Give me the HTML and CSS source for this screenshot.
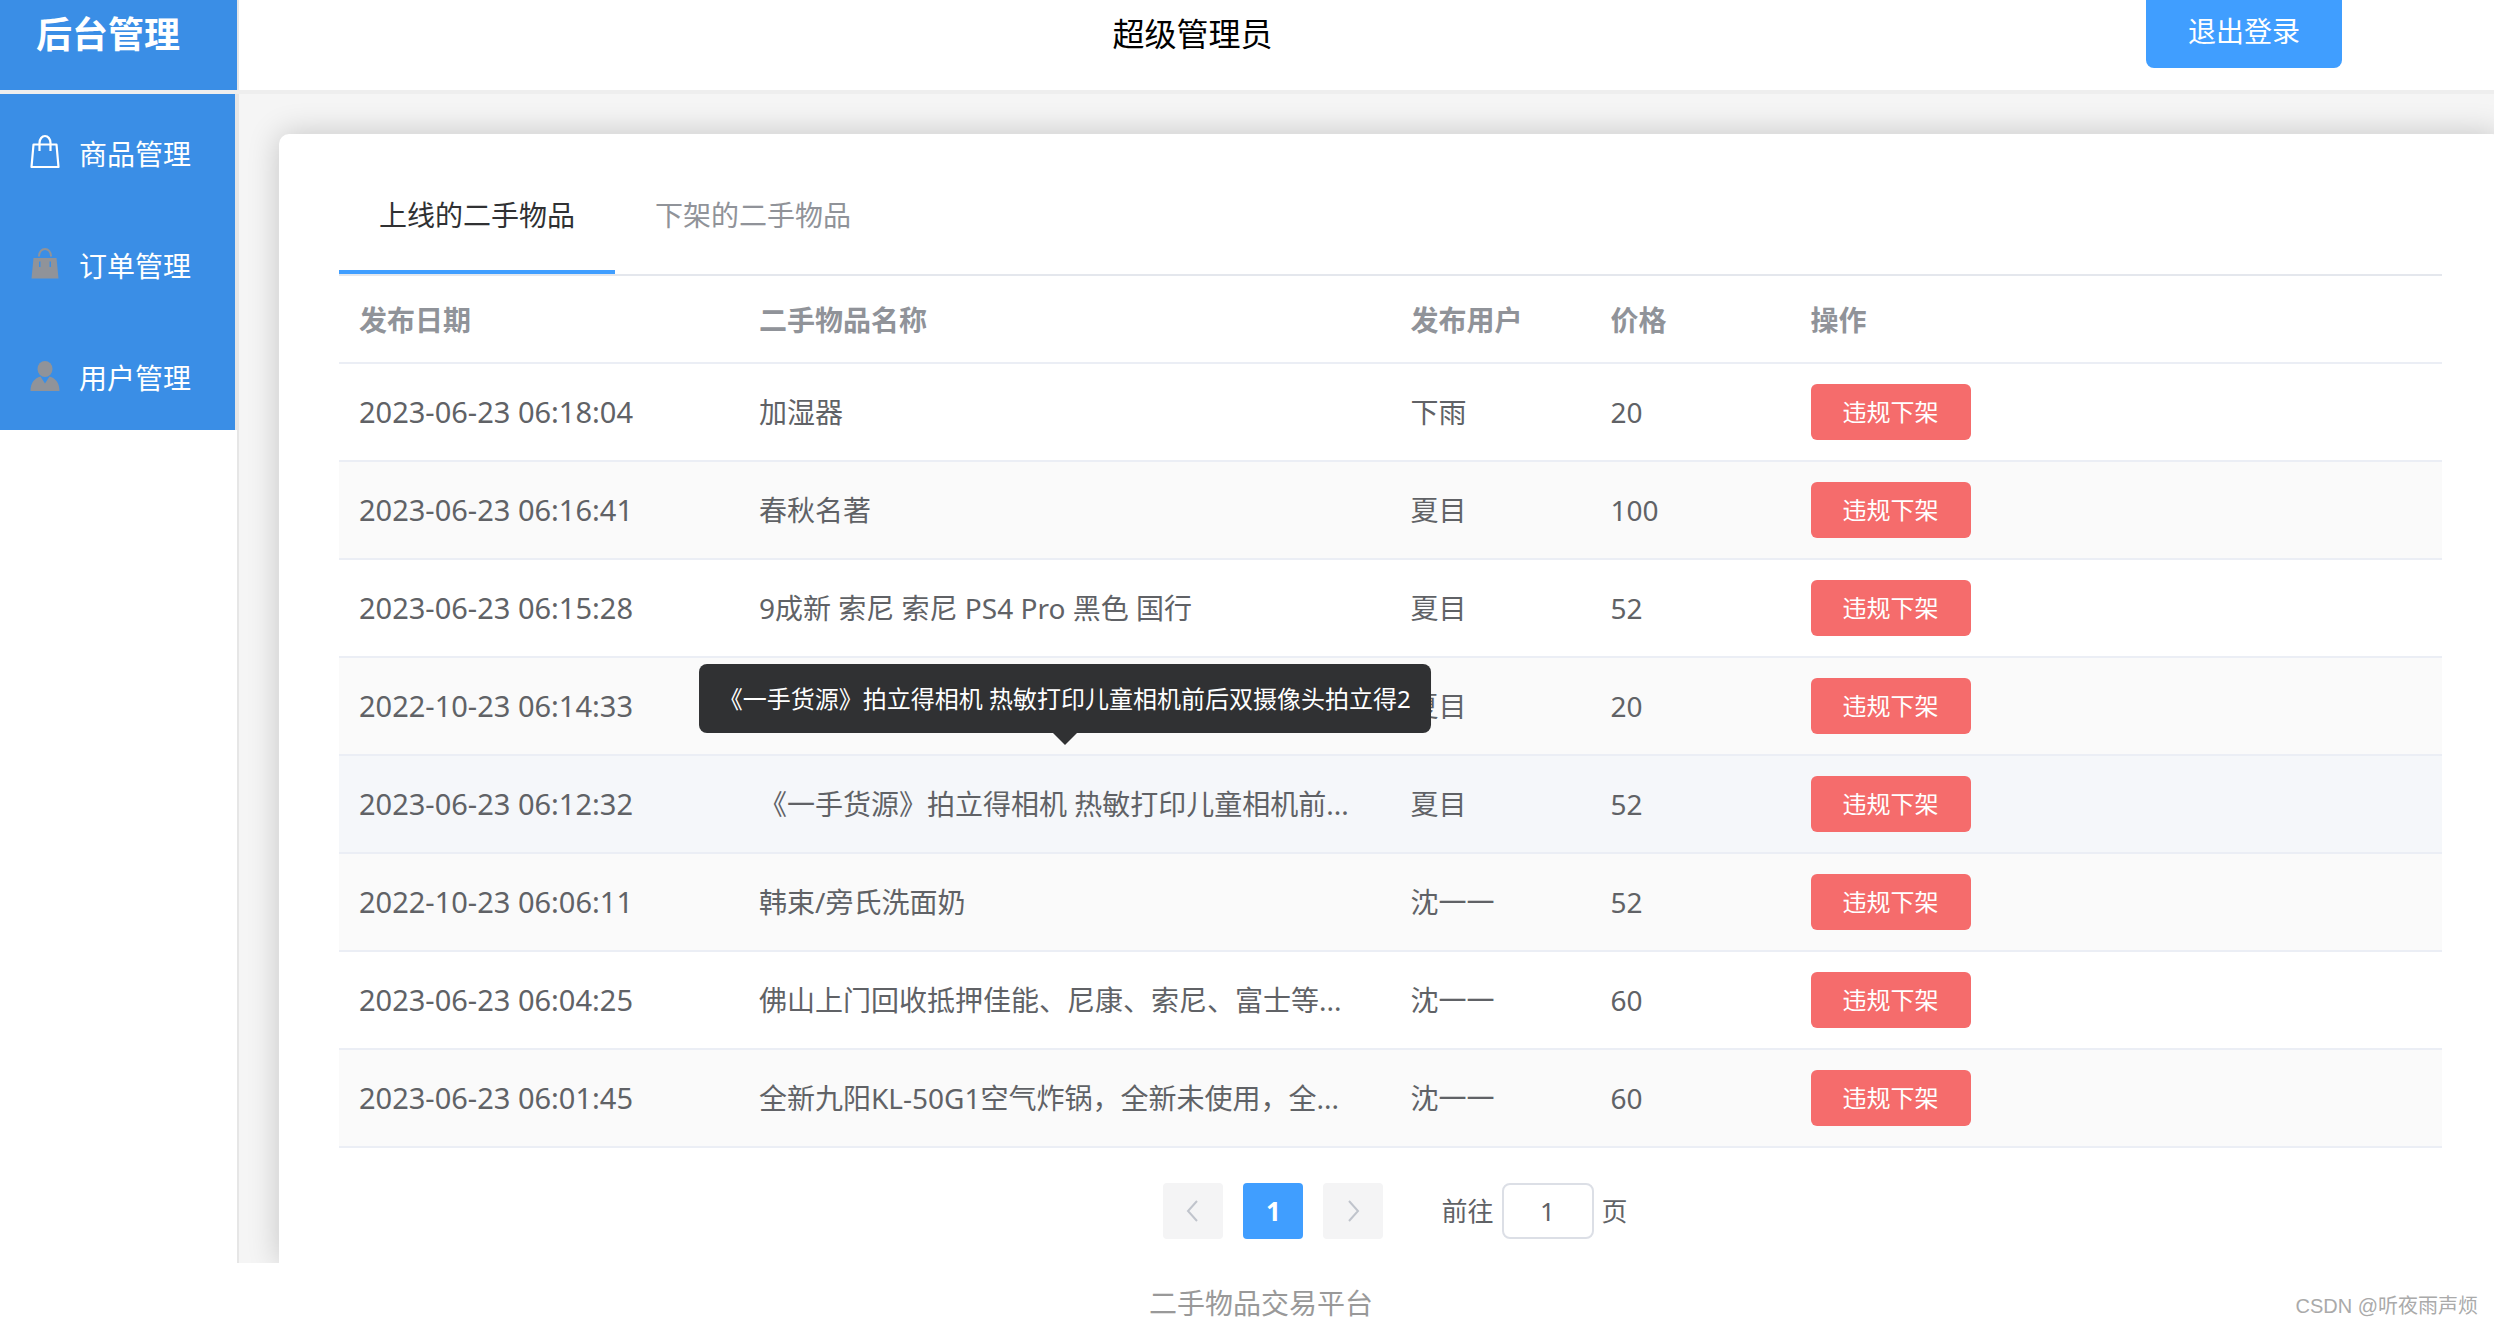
FILE: index.html
```html
<!DOCTYPE html>
<html lang="zh-CN">
<head>
<meta charset="utf-8">
<meta name="viewport" content="width=device-width, initial-scale=1">
<title>后台管理</title>
<link rel="stylesheet" href="styles.css">
</head>
<body>
<div class="page">
  <header class="header">
    <h1 class="logo">后台管理</h1>
    <span class="admin-name">超级管理员</span>
    <button class="logout" type="button">退出登录</button>
  </header>

  <div class="body">
    <aside class="aside">
      <nav class="menu">
        <a class="menu-item active" href="#goods">
          <svg class="menu-icon" viewBox="0 0 36 36" fill="none" stroke="currentColor" stroke-width="2.2" aria-hidden="true"><path d="M6.500 10.500h23l2 22.500H4.500zM12.500 17V9a5.500 7 0 0 1 11 0v8" stroke-linejoin="round"/></svg>
          商品管理
        </a>
        <a class="menu-item" href="#orders">
          <svg class="menu-icon" viewBox="0 0 36 36" fill="currentColor" aria-hidden="true"><path fill-rule="evenodd" d="M6.500 12h23l2 20.500H4.500zM12 15.500v5.500h1.500v-5.500zM22.500 15.500v5.500H24v-5.500z"/><path d="M12 10.500C12 0.500 24 0.500 24 10.500" fill="none" stroke="currentColor" stroke-width="2"/></svg>
          订单管理
        </a>
        <a class="menu-item" href="#users">
          <svg class="menu-icon" viewBox="0 0 36 36" fill="currentColor" aria-hidden="true"><ellipse cx="18" cy="11" rx="7.500" ry="8"/><path d="M3.500 33c0-8 4-13 10-14.500l4.500 7 4.500-7c6 1.500 10 6.500 10 14.500z"/></svg>
          用户管理
        </a>
      </nav>
    </aside>

    <main class="main">
      <section class="card">
        <div class="tabs" role="tablist">
          <button class="tab selected" type="button" role="tab" aria-selected="true">上线的二手物品</button>
          <button class="tab" type="button" role="tab" aria-selected="false">下架的二手物品</button>
        </div>

        <table class="table">
          <colgroup>
            <col class="col-date"><col><col class="col-small"><col class="col-small"><col>
          </colgroup>
          <thead>
            <tr><th>发布日期</th><th>二手物品名称</th><th>发布用户</th><th>价格</th><th>操作</th></tr>
          </thead>
          <tbody>
            <tr><td class="date">2023-06-23 06:18:04</td><td>加湿器</td><td>下雨</td><td>20</td><td><button class="danger" type="button">违规下架</button></td></tr>
            <tr><td class="date">2023-06-23 06:16:41</td><td>春秋名著</td><td>夏目</td><td>100</td><td><button class="danger" type="button">违规下架</button></td></tr>
            <tr><td class="date">2023-06-23 06:15:28</td><td>9成新 索尼 索尼 PS4 Pro 黑色 国行</td><td>夏目</td><td>52</td><td><button class="danger" type="button">违规下架</button></td></tr>
            <tr><td class="date">2022-10-23 06:14:33</td><td></td><td>夏目</td><td>20</td><td><button class="danger" type="button">违规下架</button></td></tr>
            <tr class="hovered"><td class="date">2023-06-23 06:12:32</td><td class="has-tooltip">《一手货源》拍立得相机 热敏打印儿童相机前...<div class="tooltip" role="tooltip">《一手货源》拍立得相机 热敏打印儿童相机前后双摄像头拍立得2</div></td><td>夏目</td><td>52</td><td><button class="danger" type="button">违规下架</button></td></tr>
            <tr><td class="date">2022-10-23 06:06:11</td><td>韩束/旁氏洗面奶</td><td>沈一一</td><td>52</td><td><button class="danger" type="button">违规下架</button></td></tr>
            <tr><td class="date">2023-06-23 06:04:25</td><td>佛山上门回收抵押佳能、尼康、索尼、富士等...</td><td>沈一一</td><td>60</td><td><button class="danger" type="button">违规下架</button></td></tr>
            <tr><td class="date">2023-06-23 06:01:45</td><td>全新九阳KL-50G1空气炸锅，全新未使用，全...</td><td>沈一一</td><td>60</td><td><button class="danger" type="button">违规下架</button></td></tr>
          </tbody>
        </table>

        <div class="pagination">
          <button class="pager" type="button" disabled aria-label="上一页"><svg class="arrow" viewBox="0 0 24 24" aria-hidden="true"><path d="M16 2 7 12l9 10"/></svg></button>
          <button class="pager current" type="button">1</button>
          <button class="pager" type="button" disabled aria-label="下一页"><svg class="arrow" viewBox="0 0 24 24" aria-hidden="true"><path d="m8 2 9 10-9 10"/></svg></button>
          <label class="jump">前往<input class="jump-input" type="text" value="1">页</label>
        </div>
      </section>
    </main>
  </div>

  <footer class="footer">
    二手物品交易平台
    <span class="watermark">CSDN @听夜雨声烦</span>
  </footer>
</div>
</body>
</html>
```
FILE: styles.css
```css
* {
  box-sizing: border-box;
}

body {
  margin: 0;
  background: #fff;
  color: #606266;
  font-family: "Noto Sans", "Noto Sans CJK SC", sans-serif;
  font-size: 28px;
  line-height: 40px;
}

button,
input {
  margin: 0;
  padding: 0;
  border: 0;
  font: inherit;
}

.page {
  display: flex;
  flex-direction: column;
  min-height: 100vh;
  overflow: hidden;
}

.header {
  display: flex;
  align-items: flex-start;
  height: 94px;
  border-bottom: 4px solid #eee;
}

.logo {
  flex: 0 0 239px;
  height: 90px;
  margin: 0;
  padding: 10px 0 0 36px;
  border-right: 2px solid #e6e6e6;
  background: #3a8ee6;
  background-clip: padding-box;
  color: #fff;
  font-size: 36px;
  line-height: 50px;
}

.admin-name {
  flex: 1;
  padding-top: 10px;
  text-align: center;
  color: #000;
  font-size: 32px;
  line-height: 48px;
}

.logout {
  width: 196px;
  height: 80px;
  margin: -12px 152px 0 0;
  padding-top: 6px;
  border-radius: 8px;
  background: #409eff;
  color: #fff;
}

.body {
  display: flex;
  flex: 1;
}

.aside {
  flex: 0 0 239px;
  border-right: 2px solid #e6e6e6;
}

.menu {
  border-right: 2px solid #e6e6e6;
  background: #3a8ee6;
}

.menu-item {
  display: flex;
  align-items: center;
  gap: 16px;
  height: 112px;
  padding: 8px 0 0 27px;
  color: #fff;
  text-decoration: none;
}

.menu-icon {
  width: 36px;
  height: 36px;
  margin-bottom: 4px;
  color: #909399;
}

.active .menu-icon {
  color: #fff;
}

.main {
  display: flex;
  flex: 1;
  min-width: 0;
  padding: 40px 0 0 40px;
  background: #f5f5f5;
  overflow: hidden;
}

.card {
  flex: 1;
  min-width: 0;
  margin-right: -8px;
  padding: 22px 60px 22px;
  border-radius: 10px 10px 0 0;
  background: #fff;
  box-shadow: 0 0 32px rgba(0, 0, 0, 0.2);
}

.tabs {
  display: flex;
  border-bottom: 2px solid #e4e7ed;
}

.tab {
  height: 118px;
  padding: 0 40px;
  background: none;
  color: #909399;
}

.selected {
  box-shadow: inset 0 -4px #409eff;
  color: #303133;
}

.table {
  width: 100%;
  border-collapse: separate;
  border-spacing: 0;
  table-layout: fixed;
}

.col-date {
  width: 400px;
}

.col-small {
  width: 200px;
}

th,
td {
  padding: 0 20px;
  border-bottom: 2px solid #ebeef5;
  text-align: left;
  white-space: nowrap;
}

th {
  height: 88px;
  padding-top: 2px;
  color: #909399;
}

td {
  height: 98px;
}

.date {
  font-size: 29px;
}

tbody tr:nth-child(even) {
  background: #fafafa;
}

tbody .hovered {
  background: #f5f7fa;
}

.danger {
  display: block;
  width: 160px;
  height: 56px;
  border-radius: 6px;
  background: #f56c6c;
  color: #fff;
  font-size: 24px;
}

.has-tooltip {
  position: relative;
}

.tooltip {
  position: absolute;
  bottom: calc(100% + 23px);
  left: 50%;
  padding: 17px 20px 16px;
  border-radius: 8px;
  background: #303133;
  color: #fff;
  font-size: 24px;
  line-height: 36px;
  transform: translateX(-50%);
}

.tooltip::after {
  content: "";
  position: absolute;
  top: 100%;
  left: 50%;
  margin-left: -12px;
  border: 12px solid transparent;
  border-top-color: #303133;
  border-bottom: 0;
}

.pagination {
  display: flex;
  justify-content: center;
  gap: 20px;
  padding: 35px 0 0 10px;
  font-size: 26px;
}

.pager {
  display: flex;
  align-items: center;
  justify-content: center;
  width: 60px;
  height: 56px;
  border-radius: 4px;
  background: #f4f4f5;
}

.current {
  background: #409eff;
  color: #fff;
  font-weight: 700;
}

.arrow {
  width: 24px;
  height: 24px;
  fill: none;
  stroke: #c0c4cc;
  stroke-width: 2;
}

.jump {
  display: flex;
  align-items: center;
  gap: 8px;
  margin-left: 38px;
}

.jump-input {
  width: 92px;
  height: 56px;
  border: 2px solid #dcdfe6;
  border-radius: 8px;
  background: #fff;
  color: #606266;
  text-align: center;
}

.footer {
  position: relative;
  height: 63px;
  padding: 20px 0 0 28px;
  text-align: center;
  color: #999;
}

.watermark {
  position: absolute;
  right: 16px;
  bottom: 4px;
  color: #aaa;
  font-family: "Liberation Sans", "Noto Sans CJK SC", sans-serif;
  font-size: 20px;
  line-height: 32px;
}
```
